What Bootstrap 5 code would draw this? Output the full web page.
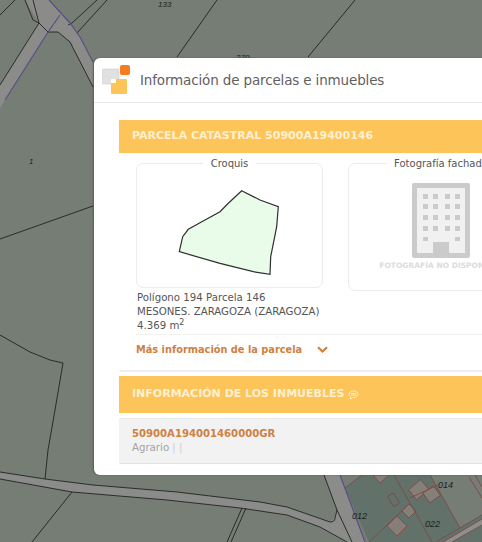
<!DOCTYPE html>
<html lang="es">
<head>
<meta charset="utf-8">
<title>Información de parcelas e inmuebles</title>
<link rel="stylesheet" href="https://cdn.jsdelivr.net/npm/bootstrap@5.3.0/dist/css/bootstrap.min.css">
<style>
html,body{height:542px;overflow:hidden}
body{background:#757d74;font-family:"DejaVu Sans",Verdana,sans-serif;font-size:11px;color:#555;padding:58px 0 0 94px;position:relative}
.mapa{position:absolute;left:0;top:0;width:482px;height:542px}
.ventana{position:relative;width:460px;height:417px;background:#fff;border-radius:6px 0 0 6px;box-shadow:-1px 0 2px rgba(0,0,0,.25)}
.cabecera{height:45px;border-bottom:1px solid #e8e8e8;padding-left:8px;gap:8px}
.cabecera h5{font-size:13.5px;font-weight:400;color:#5f5f5f;margin:0;font-family:"DejaVu Sans",sans-serif;letter-spacing:-.15px;white-space:nowrap}
.cuerpo{padding:17px 0 0 25px}
.franja{background:#fdc45a;color:#fff0d0;font-weight:700;font-size:11px;letter-spacing:0;white-space:nowrap;padding:0 13px;height:33px}
.bloque{border-bottom:2px solid #eceef0;border-radius:2px}
.interior{padding:4px 0 0 17px;height:217px}
.marcos{gap:25px}
fieldset.marco{border:1px solid #ececec;border-radius:7px;padding:0;margin:0;min-width:0;flex:none}
fieldset.marco legend{float:none;width:auto;font-size:10px;margin:0 auto;padding:0 8px;line-height:13px;color:#555;font-family:"DejaVu Sans",sans-serif}
.m1{width:187px;height:131px}
.m2{width:186px;height:134px}
.croquis{display:block}
.sin-foto{text-align:center}
.edificio{margin-top:13px}
.aviso{font-size:7.5px;font-weight:700;color:#dcdcdc;white-space:nowrap;margin-top:3px;line-height:10px}
.datos{font-size:10.2px;line-height:14px;color:#555;border-bottom:1px solid #f2f2f2;padding:0 0 1px 1px;white-space:nowrap}
.datos sup{font-size:8px;top:-.45em}
.mas{font-size:9.8px;font-weight:700;color:#d0803f;margin-top:8px;gap:15px;line-height:13px}
.franja2{height:37px;margin-top:4px}
.ficha{background:#f2f2f3;border-bottom:1px solid #e4e4e4;border-top:1px solid #e8e8e8;height:46px;margin-top:5px;padding:8px 13px 0;border-radius:2px}
.ficha b{display:block;color:#d0803f;font-size:10.1px;line-height:14px}
.ficha span{display:block;color:#a3a3a3;font-size:10.2px;line-height:14px}
.ficha i{font-style:normal;color:#cfcfcf}
</style>
</head>
<body>
<svg class="mapa" viewBox="0 0 482 542" aria-hidden="true">
  <g fill="#8b8c89">
    <path d="M25 0H49L70 23L80 37L93 62V87L70 42L58 32H48L5 100L0 108V85L39 23Z"/>
    <path d="M0 472L45 479L93 485L177 492L260 502L287 507L330 522L335 518L337 510L324 475H340L365 542H352L320 527L287 515L240 508L167 500L72 492L0 479Z"/>
    <path d="M337 510L352 542H347L320 527L322 520L333 522Z"/>
  </g>
  <path d="M345 488L362 475H394L432 542H369Z" fill="#62716a"/>
  <path d="M394 475H430L460 528L436 542H432Z" fill="#62716a"/>
  <path d="M436 542L482 515V542Z" fill="#62716a"/>
  <path d="M443 542L482 519V525L452 542Z" fill="#8e8f8b"/>
  <g fill="none" stroke="#20241f" stroke-width=".9">
    <path d="M15 0L0 15M25 0L33 20L39 23L48 32M33 0L39 23L0 85M48 32H58L70 42L93 87M97 0L72 23L68 25M107 0L77 33"/>
    <path d="M177 57L217 0M308 57L355 0M93 206L0 239M0 335L30 352L50 360L63 363L55 410L48 450L45 479"/>
    <path d="M72 492L32 542M242 508L227 542M246 508L231 542"/>
    <path d="M0 472L45 479L93 485L177 492L260 502L287 507L330 522Q335 522 335 518L337 510L324 475M337 510L352 542"/>
    <path d="M0 479L72 492L167 500L240 508L287 515L320 527L347 542"/>
  </g>
  <g fill="none" stroke="#5a4f86" stroke-width="1.2">
    <path d="M49 0L70 23L80 37L93 62M60 15L48 32L5 100"/>
    <path d="M340 475L365 542"/>
  </g>
  <g fill="#857f7a" stroke="#7c4b46" stroke-width=".9">
    <path d="M373 475L380 483L389 475Z"/>
    <rect x="390" y="494" width="7" height="12" rx="1" fill="none" transform="rotate(-30 393 500)"/>
    <rect x="390" y="519" width="14" height="14" transform="rotate(-45 397 526)" stroke="#9c3f45"/>
    <rect x="404" y="506" width="10" height="10" transform="rotate(-45 409 511)"/>
    <rect x="411" y="483" width="16" height="13" transform="rotate(-40 419 490)"/>
    <rect x="425" y="488" width="13" height="12" transform="rotate(-35 432 494)"/>
    <path d="M345 488L362 475M394 475L432 542M430 475L460 528M369 542L405 508M410 498L438 485M436 542L482 515M443 542L482 519M452 542L482 525M469 477L482 498M475 475L482 487" fill="none"/>
  </g>
  <g fill="#1b1f1c" font-family="Liberation Sans,sans-serif" font-size="8" font-style="italic">
    <text x="158" y="7">133</text>
    <text x="236" y="60">270</text>
    <text x="29" y="164">1</text>
    <text x="352" y="519" font-size="9">012</text>
    <text x="425" y="527" font-size="9">022</text>
    <text x="438" y="488" font-size="9">014</text>
  </g>
</svg>
<div class="ventana">
  <div class="cabecera d-flex align-items-center">
    <svg width="30" height="30" viewBox="0 0 30 30" aria-hidden="true">
      <rect x="0" y="4" width="17" height="15" rx="1" fill="#e1e1e3" stroke="#cfcfd2" stroke-width=".6"/>
      <rect x="18" y="0" width="10" height="10" rx="2" fill="#f57c1f"/>
      <rect x="9" y="14" width="16" height="15" rx="1" fill="#fdc45a"/>
      <rect x="9" y="14" width="5" height="4" fill="#fff"/>
    </svg>
    <h5>Información de parcelas e inmuebles</h5>
  </div>
  <div class="cuerpo">
    <div class="bloque">
      <div class="franja d-flex align-items-center">PARCELA CATASTRAL 50900A19400146</div>
      <div class="interior">
        <div class="marcos d-flex align-items-start">
          <fieldset class="marco m1">
            <legend>Croquis</legend>
            <svg class="croquis" width="185" height="110" viewBox="137 170 185 110" aria-hidden="true">
              <path d="M241.700 190.700L260 200L278.300 206.700L276.700 226.700L270.700 256.700L270 274.300L253.300 271.700L220 263.300L179.300 251.700L182.700 236.700L188.300 229.300L200 222.700L220 211.700L228.300 203.300Z" fill="#e9fbe9" stroke="#2f2f2f" stroke-width="1.200"/>
            </svg>
          </fieldset>
          <fieldset class="marco m2">
            <legend>Fotografía fachada</legend>
            <div class="sin-foto">
              <svg width="58" height="75" viewBox="0 0 58 75" aria-hidden="true" class="d-block mx-auto edificio">
                <rect width="58" height="75" rx="2" fill="#cbcbcb"/>
                <rect x="5" y="5" width="48" height="65" fill="#f1f1f1"/>
                <g fill="#cbcbcb">
                  <path d="M11 11h5v5h-5zM21 11h5v5h-5zM33 11h5v5h-5zM43 11h5v5h-5zM11 21h5v5h-5zM21 21h5v5h-5zM33 21h5v5h-5zM43 21h5v5h-5zM11 32h5v5h-5zM21 32h5v5h-5zM33 32h5v5h-5zM43 32h5v5h-5zM11 43h5v5h-5zM21 43h5v5h-5zM33 43h5v5h-5zM43 43h5v5h-5zM11 54h5v4h-5zM43 54h5v4h-5zM21 59h16v16h-16z"/>
                </g>
              </svg>
              <div class="aviso">FOTOGRAFÍA NO DISPONIBLE</div>
            </div>
          </fieldset>
        </div>
        <div class="datos">Polígono 194 Parcela 146<br>MESONES. ZARAGOZA (ZARAGOZA)<br>4.369 m<sup>2</sup></div>
        <div class="mas d-flex align-items-center">Más información de la parcela
          <svg width="11" height="7" viewBox="0 0 11 7" aria-hidden="true"><path d="M1 1.200L5.500 5.500L10 1.200" fill="none" stroke="#d0803f" stroke-width="2.200"/></svg>
        </div>
      </div>
    </div>
    <div class="franja franja2 d-flex align-items-center">INFORMACIÓN DE LOS INMUEBLES&nbsp;<svg width="11" height="10" viewBox="0 0 11 10" aria-hidden="true"><path d="M5.500 1C8 1 10 2.400 10 4.300S8 7.600 5.500 7.600H4.500L2.500 9V7C1.500 6.400 1 5.400 1 4.300C1 2.400 3 1 5.500 1ZM3 3.600H8M3 5.200H8" fill="none" stroke="#fff0d0" stroke-width="1"/></svg></div>
    <div class="ficha">
      <b>50900A194001460000GR</b>
      <span>Agrario <i>| |</i></span>
    </div>
  </div>
</div>
<script src="https://cdn.jsdelivr.net/npm/bootstrap@5.3.0/dist/js/bootstrap.bundle.min.js"></script>
</body>
</html>
